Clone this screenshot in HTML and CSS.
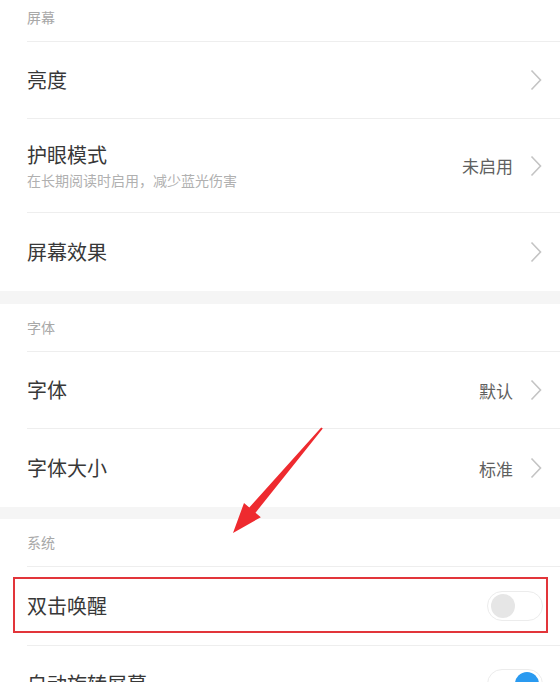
FILE: index.html
```html
<!DOCTYPE html>
<html lang="zh-CN">
<head>
<meta charset="utf-8">
<title>显示设置</title>
<link rel="stylesheet" href="styles.css">
</head>
<body>
<div class="page">
  <section class="group">
    <div class="header header-first">屏幕</div>
    <div class="row">
      <div class="label"><div class="title">亮度</div></div>
      <svg class="chev" viewBox="0 0 12 22"><path d="M1.5 1.5 L10.5 11 L1.5 20.5"/></svg>
    </div>
    <div class="row row-tall">
      <div class="label">
        <div class="title">护眼模式</div>
        <div class="sub">在长期阅读时启用，减少蓝光伤害</div>
      </div>
      <span class="value">未启用</span>
      <svg class="chev" viewBox="0 0 12 22"><path d="M1.5 1.5 L10.5 11 L1.5 20.5"/></svg>
    </div>
    <div class="row row-last">
      <div class="label"><div class="title">屏幕效果</div></div>
      <svg class="chev" viewBox="0 0 12 22"><path d="M1.5 1.5 L10.5 11 L1.5 20.5"/></svg>
    </div>
  </section>
  <div class="gap"></div>
  <section class="group">
    <div class="header">字体</div>
    <div class="row">
      <div class="label"><div class="title">字体</div></div>
      <span class="value">默认</span>
      <svg class="chev" viewBox="0 0 12 22"><path d="M1.5 1.5 L10.5 11 L1.5 20.5"/></svg>
    </div>
    <div class="row row-last">
      <div class="label"><div class="title">字体大小</div></div>
      <span class="value">标准</span>
      <svg class="chev" viewBox="0 0 12 22"><path d="M1.5 1.5 L10.5 11 L1.5 20.5"/></svg>
    </div>
  </section>
  <div class="gap gap2"></div>
  <section class="group">
    <div class="header">系统</div>
    <div class="row row-mark">
      <div class="label"><div class="title">双击唤醒</div></div>
      <span class="toggle"><span class="knob"></span></span>
      <div class="mark"></div>
    </div>
    <div class="row">
      <div class="label"><div class="title">自动旋转屏幕</div></div>
      <span class="toggle on"><span class="knob"></span></span>
    </div>
  </section>
  <svg class="arrow" viewBox="0 0 120 130" width="120" height="130">
    <path d="M91.2 7.4 L92.8 8.6 L25.5 92.7 L30.8 97.2 L3 113 L14 83 L19.3 87.5 Z" fill="#ee2a2f"/>
  </svg>
</div>
</body>
</html>
```
FILE: styles.css
```css
html, body {
  margin: 0;
  padding: 0;
  background: #ffffff;
}
body {
  font-family: "Noto Sans CJK SC", "Noto Sans", sans-serif;
  color: #333333;
  overflow: hidden;
}
.page {
  position: relative;
  width: 560px;
  height: 682px;
  overflow: hidden;
}
.group {
  display: flex;
  flex-direction: column;
}
.header {
  height: 48px;
  box-sizing: border-box;
  padding-top: 13px;
  font-size: 14px;
  line-height: 20px;
  color: #a8a8a8;
  border-bottom: 1px solid #eeeeee;
  margin-left: 27px;
}
.header-first {
  height: 42px;
  padding-top: 7px;
}
.row {
  display: flex;
  align-items: center;
  height: 77px;
  box-sizing: border-box;
  margin-left: 27px;
  padding-right: 18px;
  border-bottom: 1px solid #eeeeee;
  position: relative;
}
.row-tall {
  height: 94px;
}
.row-last {
  border-bottom: none;
  height: 78px;
}
.row-mark {
  height: 79px;
}
.label {
  flex: 1;
  display: flex;
  flex-direction: column;
}
.title {
  font-size: 20px;
  line-height: 28px;
  color: #383838;
}
.sub {
  font-size: 14px;
  line-height: 20px;
  color: #b0b0b0;
  margin-top: 1px;
}
.value {
  font-size: 17px;
  color: #606060;
  margin-right: 17px;
}
.chev {
  width: 12px;
  height: 22px;
  fill: none;
  stroke: #c4c4c4;
  stroke-width: 1.6;
}
.gap {
  height: 13px;
  background: #f5f5f5;
}
.gap2 {
  height: 12px;
}
.toggle {
  width: 56px;
  height: 30px;
  box-sizing: border-box;
  border: 1px solid #ececec;
  border-radius: 15px;
  background: #ffffff;
  display: flex;
  align-items: center;
  padding: 0 3px;
  margin-right: -1px;
}
.knob {
  width: 24px;
  height: 24px;
  border-radius: 50%;
  background: #e6e6e6;
}
.toggle.on {
  justify-content: flex-end;
}
.toggle.on .knob {
  background: #2a9af0;
}
.mark {
  position: absolute;
  left: -14px;
  right: 12px;
  top: 10px;
  bottom: 12px;
  border: 2.5px solid #e2353a;
}
.arrow {
  position: absolute;
  left: 230px;
  top: 420px;
}
```
